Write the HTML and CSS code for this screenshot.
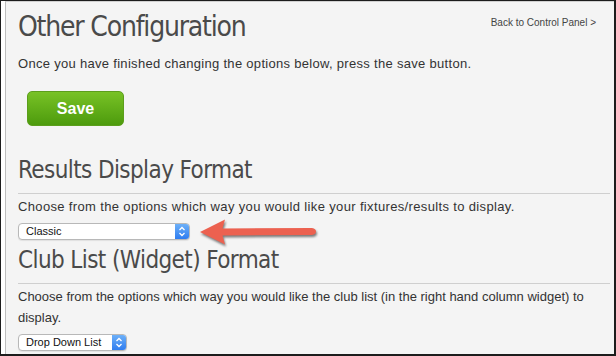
FILE: index.html
```html
<!DOCTYPE html>
<html lang="en">
<head>
  <meta charset="UTF-8">
  <title>Other Configuration</title>
  <link rel="stylesheet" href="styles.css">
</head>
<body>
  <div class="window">
    <div class="page">
      <div class="page-header">
        <h1>Other Configuration</h1>
        <a href="#" class="back-link">Back to Control Panel &gt;</a>
      </div>
      <p class="intro">Once you have finished changing the options below, press the save button.</p>
      <button class="save-btn">Save</button>

      <section class="option">
        <h2>Results Display Format</h2>
        <p>Choose from the options which way you would like your fixtures/results to display.</p>
        <div class="select-row">
          <div class="select select-wide">
            <span class="select-value">Classic</span>
            <span class="select-arrows">
              <svg width="8" height="11" viewBox="0 0 8 11"><path d="M1.5 4 L4 1.5 L6.5 4 M1.5 7 L4 9.5 L6.5 7" fill="none" stroke="#fff" stroke-width="1.3"/></svg>
            </span>
          </div>
          <svg class="callout" width="118" height="26" viewBox="0 0 118 26">
            <path d="M0 13 L25 0.5 L22.5 9.5 L112 9 Q116 9.5 116 12.5 Q116 15.5 112 16 L22.5 16.5 L25 25.5 Z" fill="#ec6150"/>
          </svg>
        </div>
      </section>

      <section class="option">
        <h2>Club List (Widget) Format</h2>
        <p>Choose from the options which way you would like the club list (in the right hand column widget) to display.</p>
        <div class="select-row">
          <div class="select select-narrow">
            <span class="select-value">Drop Down List</span>
            <span class="select-arrows">
              <svg width="8" height="11" viewBox="0 0 8 11"><path d="M1.5 4 L4 1.5 L6.5 4 M1.5 7 L4 9.5 L6.5 7" fill="none" stroke="#fff" stroke-width="1.3"/></svg>
            </span>
          </div>
        </div>
      </section>
    </div>
  </div>
</body>
</html>
```

FILE: styles.css
```css
* {
  box-sizing: border-box;
}

body {
  margin: 0;
  font-family: "Liberation Sans", Arial, sans-serif;
  color: #333;
}

.window {
  width: 616px;
  height: 356px;
  overflow: hidden;
  background-color: #fff;
  border-top: 1px solid #1c1c1c;
  border-left: 1px solid #1c1c1c;
  border-right: 2px solid #1c1c1c;
  border-bottom: 2px solid #1c1c1c;
  padding-left: 4px;
}

.page {
  height: 100%;
  background-color: #f4f4f4;
  border-left: 1px solid #bdbdbd;
  border-top: 1px solid #d0d0d0;
  padding: 0 4px 0 12px;
}

.page-header {
  display: flex;
  justify-content: space-between;
  align-items: flex-start;
}

h1,
h2 {
  font-family: "DejaVu Sans Condensed", "Liberation Sans", sans-serif;
  font-weight: normal;
  color: #4a4a4a;
  margin: 0;
}

h1 {
  font-size: 28px;
  letter-spacing: -1.2px;
  line-height: 40px;
  margin-top: 5px;
}

.back-link {
  font-size: 10px;
  color: #444;
  text-decoration: none;
  margin-top: 15px;
  margin-right: 14px;
}

p {
  margin: 0;
  font-size: 13px;
  line-height: 21px;
}

.intro {
  margin-top: 6px;
  letter-spacing: 0.3px;
}

.save-btn {
  display: block;
  width: 97px;
  height: 35px;
  margin: 17px 0 0 9px;
  padding: 0;
  font-family: "Liberation Sans", Arial, sans-serif;
  font-size: 16px;
  font-weight: bold;
  color: #fff;
  background: linear-gradient(#78c226, #4d9b0d);
  border: 1px solid #5c9e1c;
  border-radius: 5px;
  cursor: pointer;
}

.option h2 {
  font-size: 24px;
  letter-spacing: -0.6px;
  line-height: 30px;
  padding-bottom: 8px;
  border-bottom: 1px solid #cfcfcf;
}

.option:first-of-type {
  margin-top: 29px;
}

.option + .option {
  margin-top: 5px;
}

.option p {
  margin-top: 2px;
}

.option:first-of-type p {
  letter-spacing: 0.35px;
}

.select-row {
  display: flex;
  align-items: center;
  height: 17px;
  margin-top: 6px;
  gap: 10px;
}

.select {
  display: flex;
  height: 17px;
  background-color: #fff;
  border: 1px solid #b8b8b8;
  border-radius: 4px;
  overflow: hidden;
  box-shadow: 0 1px 1px rgba(0, 0, 0, 0.08);
}

.select-wide {
  width: 172px;
}

.select-narrow {
  width: 109px;
}

.select-value {
  flex-grow: 1;
  font-size: 11px;
  line-height: 15px;
  color: #111;
  padding-left: 7px;
}

.select-arrows {
  width: 14px;
  display: flex;
  align-items: center;
  justify-content: center;
  background: linear-gradient(#6db0f8, #2f7df0);
}

.callout {
  flex-shrink: 0;
  filter: drop-shadow(1px 2px 1px rgba(0, 0, 0, 0.5));
}
```
